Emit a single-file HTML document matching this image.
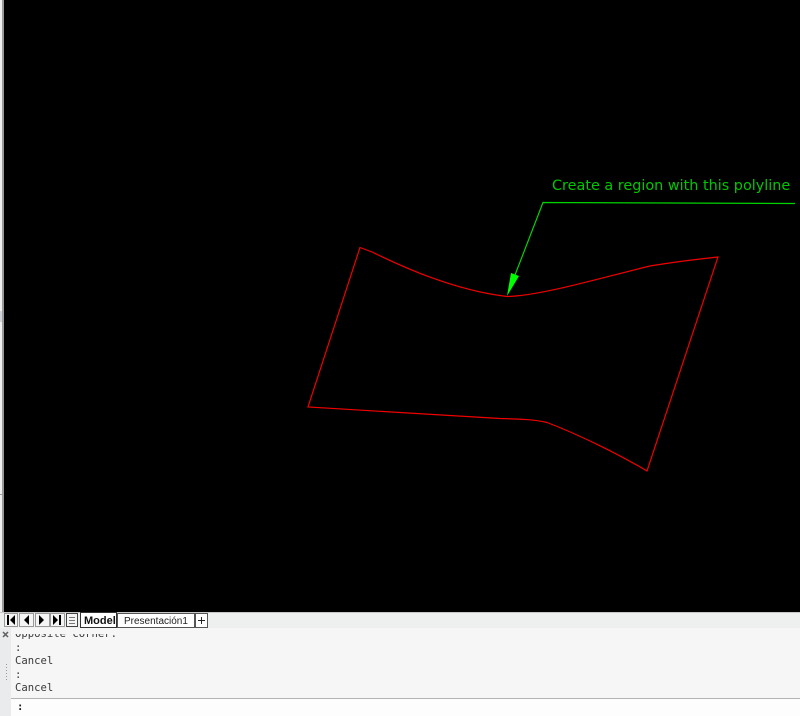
<!DOCTYPE html>
<html>
<head>
<meta charset="utf-8">
<style>
html,body{margin:0;padding:0;background:#000;}
#p{position:relative;width:800px;height:716px;overflow:hidden;background:#000;font-family:"Liberation Sans",sans-serif;}
.a{position:absolute;}
.m{font-family:"DejaVu Sans Mono",monospace;font-size:10.6px;color:#3a3a3a;line-height:13px;white-space:pre;}
</style>
</head>
<body>
<div id="p">
<div class="a" style="left:0;top:0;width:2px;height:612px;background:#f0f0f0"></div>
<div class="a" style="left:2px;top:0;width:2px;height:612px;background:#9a9a9a"></div>
<div class="a" style="left:0;top:311px;width:2px;height:11px;background:#cdd3d8"></div>
<div class="a" style="left:0;top:494px;width:2px;height:1px;background:#a0a0a0"></div>

<svg class="a" style="left:0;top:0" width="800" height="612" viewBox="0 0 800 612">
<path fill="none" stroke="#f00000" stroke-width="1.2" d="M360 247.500L372 252C395 263 450 290 507 296.500C540 296 600 278 650 266C680 261 700 259 718 257L647 471C620 455 580 435 547 422.500C535 419.500 520 419 500 418.500L308 407Z"/>
<polyline fill="none" stroke="#00d400" stroke-width="1.2" points="795,203.500 670,203 543,202.500 515,275"/>
<polygon fill="#00ff00" points="507,296 511,273 519,276"/>
<text x="552" y="190" font-family="DejaVu Sans, sans-serif" font-size="14.4" fill="#00c800">Create a region with this polyline</text>
</svg>

<!-- tab bar -->
<div class="a" style="left:0;top:612px;width:800px;height:16px;background:#eef0f0;border-top:1px solid #c8c8c8;box-sizing:border-box"></div>
<svg class="a" style="left:0;top:612px" width="210" height="16" viewBox="0 0 210 16">
<rect x="4.500" y="1.500" width="13" height="13" fill="#f4f4f4" stroke="#999"/>
<rect x="19.500" y="1.500" width="14" height="13" fill="#f4f4f4" stroke="#999"/>
<rect x="35.500" y="1.500" width="14" height="13" fill="#f4f4f4" stroke="#999"/>
<rect x="50.500" y="1.500" width="14" height="13" fill="#f4f4f4" stroke="#999"/>
<rect x="7" y="3" width="2" height="10" fill="#000"/><path d="M15 3v10l-5-5z" fill="#000"/>
<path d="M29 3v10l-5-5z" fill="#000"/>
<path d="M39 3v10l5-5z" fill="#000"/>
<path d="M53 3v10l5-5z" fill="#000"/><rect x="59" y="3" width="2" height="10" fill="#000"/>
<rect x="66.500" y="1.500" width="11" height="13" fill="#f4f4f4" stroke="#444"/>
<path d="M69 5.500h6M69 8.500h6M69 11.500h6" stroke="#777" stroke-width="1"/>
<rect x="80.500" y="0.500" width="36" height="15" fill="#fff" stroke="#333"/>
<rect x="117.500" y="1.500" width="77" height="14" fill="#fff" stroke="#555"/>
<rect x="195.500" y="1.500" width="12" height="14" fill="#fff" stroke="#555"/>
<text x="84" y="12" font-family="Liberation Sans, sans-serif" font-size="11" font-weight="bold" fill="#111">Model</text>
<text x="124" y="12" font-family="Liberation Sans, sans-serif" font-size="10" fill="#222">Presentación1</text>
<path d="M198 8.500h7M201.500 5v7" stroke="#222" stroke-width="1"/>
</svg>

<!-- command area -->
<div class="a" style="left:0;top:628px;width:800px;height:88px;background:#f6f6f6"></div>
<div class="a" style="left:0;top:628px;width:11px;height:88px;background:#e9ebec"></div>
<svg class="a" style="left:0;top:628px" width="11" height="88" viewBox="0 0 11 88">
<path d="M3 4l5 5M8 4l-5 5" stroke="#606060" stroke-width="1.500"/>
<path d="M6.500 36v1M6.500 39v1M6.500 42v1M6.500 45v1M6.500 48v1M6.500 51v1" stroke="#999" stroke-width="1"/>
</svg>
<div class="a" style="left:11px;top:628px;width:789px;height:70px;overflow:hidden">
<div class="m a" style="left:4px;top:0px">Opposite corner:</div>
<div class="a" style="left:0;top:0;width:789px;height:6px;background:#f6f6f6"></div>
<div class="m a" style="left:4px;top:14px">:</div>
<div class="m a" style="left:4px;top:27px">Cancel</div>
<div class="m a" style="left:4px;top:41px">:</div>
<div class="m a" style="left:4px;top:54px">Cancel</div>
</div>
<div class="a" style="left:11px;top:698px;width:789px;height:1px;background:#b4b4b4"></div>
<div class="a" style="left:11px;top:699px;width:789px;height:17px;background:#fdfdfd"></div>
<div class="m a" style="left:17px;top:701px;color:#222;font-weight:bold">:</div>
</div>
</body>
</html>
